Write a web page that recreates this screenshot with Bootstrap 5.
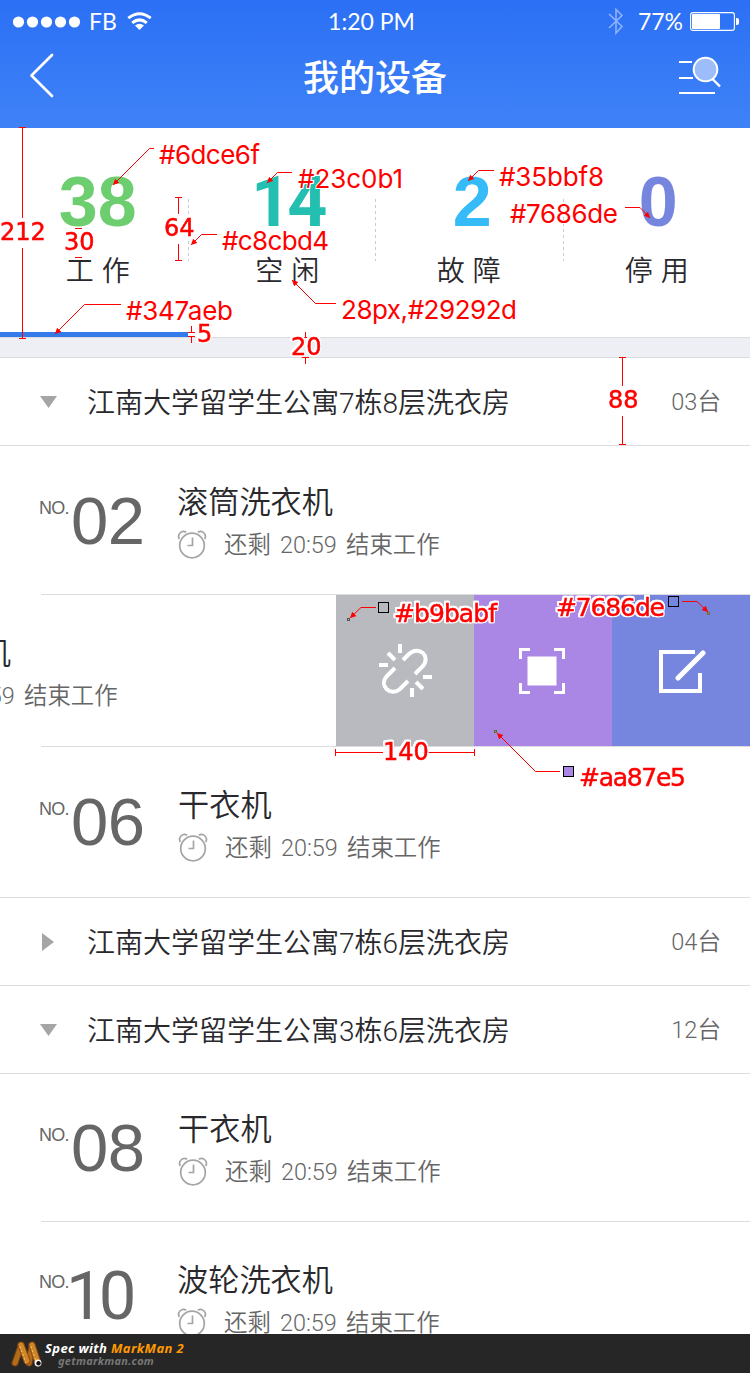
<!DOCTYPE html>
<html lang="zh-CN">
<head>
<meta charset="utf-8">
<meta name="viewport" content="width=device-width, initial-scale=1">
<title>我的设备</title>
<link href="https://cdn.jsdelivr.net/npm/bootstrap@5.3.0/dist/css/bootstrap.min.css" rel="stylesheet">
<style>
html,body{overflow:hidden}
body{font-family:"Liberation Sans","Noto Sans CJK SC",sans-serif;font-weight:350;color:#29292d;background:#fff;width:750px;height:1373px}
.screen{height:1373px;position:relative}
.top-area{height:128px;background:linear-gradient(#2b70f5,#3f82f7);color:#fff}
.status{height:43px;font:400 23px/43px Lato,sans-serif;padding:0 11px 0 13px}
.status>div{flex:1 1 0}
.clock-time{margin:0 4px 0 -5px}
.titlebar{height:85px;padding:0 29px}
.titlebar h1{font-size:36px;font-weight:500;line-height:72px;margin:0}
.titlebar>div{flex:1 1 0;height:85px}
.stats{height:210px;border-bottom:1px solid #dcdce0;position:relative}
.stats .stat{flex:none;width:25%;text-align:center;padding-top:38px;position:relative}
.stat b{display:block;font-size:70px;line-height:72px;font-weight:700}
.stat b.ones{font-family:Roboto,sans-serif;letter-spacing:-4px}
.stat span{display:block;font-size:28px;line-height:36px;margin-top:16px;white-space:pre}
.stat+.stat::before{content:"";position:absolute;left:0;top:71px;height:62px;width:1px;background:repeating-linear-gradient(#c8cbd4 0 3px,transparent 3px 6px)}
.tabline{position:absolute;left:0;bottom:0;width:188px;height:5px;background:#347aeb}
.gap-band{height:20px;background:#eeeff4;border-bottom:1px solid #dcdce0}
.group{height:88px;border-bottom:1px solid #dcdce0;padding:0 29px 0 40px;font-size:28px;font-family:Roboto,"Noto Sans CJK SC",sans-serif}
.group .caret{width:47px;flex:none;display:flex}
.group .name{line-height:82px;padding-top:5px;flex:1}
.group .total{font-size:23.6px;color:#666;line-height:86px}
.item{position:relative;overflow:hidden;flex:none}
.item.line::after{content:"";position:absolute;left:41px;right:0;bottom:0;height:1px;background:#dcdce0}
.item.full{border-bottom:1px solid #dcdce0}
.numb{width:138px;margin-left:39px;flex:none;color:#666;display:flex;align-items:flex-start}
.numb small{font-size:18px;line-height:20px;letter-spacing:-.7px;margin-top:6px;width:32px;flex:none}
.numb strong{font-size:67px;font-weight:400;line-height:58px;letter-spacing:-.5px}
.numb strong.ones{font-family:Roboto,sans-serif;letter-spacing:-5px;margin:1px 0 0 -5px}
.info{white-space:nowrap}
.info h2{font-size:31.2px;font-weight:350;line-height:40px;margin:1px 0 0}
.info p{font-family:Roboto,"Noto Sans CJK SC",sans-serif;font-size:23.4px;line-height:30px;word-spacing:3.5px;color:#666;margin:7px 0 0;display:flex}
.info p svg{margin:0 17px 0 0;flex:none}
.act{width:138px;height:151px;flex:none;display:flex}
.brandbar{position:absolute;left:0;bottom:0;width:100%;height:39px;background:#262626;font-family:"Noto Sans",sans-serif;font-style:italic;font-weight:700;color:#fff;padding-left:10px}
.brandbar .l1{font-size:13px;letter-spacing:.38px;line-height:14px;margin-top:7px}
.brandbar .l2{font-size:11px;letter-spacing:.25px;line-height:12px;color:#777;padding-left:13px}
.marks{position:absolute;left:0;top:0;pointer-events:none}
.marks .thin{font:400 26px Inter,sans-serif;fill:red;stroke:#fff;stroke-width:2px;paint-order:stroke}
.marks .wide{font:400 24px "DejaVu Sans",sans-serif;fill:red;stroke:red;stroke-width:.5px;filter:drop-shadow(1.5px 0 0 #fff) drop-shadow(-1.5px 0 0 #fff) drop-shadow(0 1.5px 0 #fff) drop-shadow(0 -1.5px 0 #fff)}
.marks .wide .hex{font-size:25px}
</style>
<script src="https://cdn.jsdelivr.net/npm/bootstrap@5.3.0/dist/js/bootstrap.bundle.min.js"></script>
</head>
<body>
<svg width="0" height="0" class="position-absolute"><defs>
<symbol id="clock" viewBox="0 0 30 30"><g fill="none" stroke="#a5a5a5" stroke-width="1.7"><circle cx="15" cy="15.5" r="12.3"/><path d="M15.5 7.500V15.500H10.500M2.300 9C-.2 4.500 4.500-.2 9.200 2.200M27.700 9C30.200 4.500 25.500-.2 20.800 2.200"/></g></symbol>
<marker id="tip" markerWidth="7" markerHeight="7" refX="6" refY="3" orient="auto" markerUnits="userSpaceOnUse"><path d="M0 0L6 3L0 6z" fill="red"/></marker>
</defs></svg>
<main class="screen d-flex flex-column overflow-hidden">
<header class="top-area flex-shrink-0">
 <div class="status d-flex align-items-center">
  <div class="d-flex align-items-center">
   <svg width="68" height="12" fill="#fff"><circle cx="5.500" cy="6" r="5.600"/><circle cx="19.500" cy="6" r="5.600"/><circle cx="33.500" cy="6" r="5.600"/><circle cx="47.500" cy="6" r="5.600"/><circle cx="61.500" cy="6" r="5.600"/></svg>
   <span style="margin:0 10px 0 8px">FB</span>
   <svg width="25" height="19" viewBox="0 0 25 19"><g fill="none" stroke="#fff" stroke-width="3"><path d="M1.300 6.200Q12.500-2.800 23.700 6.200M5.200 10.800Q12.500 5 19.800 10.800"/></g><path d="M8 13.500Q12.500 10 17 13.500L12.500 18z" fill="#fff"/></svg>
  </div>
  <span class="clock-time">1:20 PM</span>
  <div class="d-flex align-items-center justify-content-end">
   <svg width="16" height="27" viewBox="0 0 16 27" fill="none" stroke="#8fb2fa" stroke-width="1.600"><path d="M1 6L14 18.500L8 25V1.500L14 7.500L1 20"/></svg>
   <span style="margin:0 7px 0 14px">77%</span>
   <svg width="49" height="19" viewBox="0 0 49 19"><rect x=".6" y=".6" width="43.800" height="17.800" rx="2.500" fill="none" stroke="#fff" stroke-width="1.100"/><rect x="2" y="2" width="28" height="15" rx="1" fill="#fff"/><path d="M46 6h1a2 2 0 0 1 2 2v3a2 2 0 0 1-2 2h-1z" fill="#fff"/></svg>
  </div>
 </div>
 <div class="titlebar d-flex">
  <div><svg width="26" height="46" viewBox="0 0 26 46" style="margin-top:9px"><path d="M23 3L2.500 23.500L23 44" fill="none" stroke="#fff" stroke-width="2.700" stroke-linecap="round" stroke-linejoin="round"/></svg></div>
  <h1>我的设备</h1>
  <div class="text-end"><svg width="44" height="42" viewBox="0 0 44 42" style="margin-top:12px"><g stroke="#fff" stroke-width="2" fill="none"><path d="M2 7H15M2 23H16M2 38H38"/><circle cx="28.500" cy="14.500" r="11.800" fill="#9dbcfa"/><path d="M35.500 24L43 31.500" stroke-width="2.400"/></g></svg></div>
 </div>
</header>
<section class="stats d-flex flex-shrink-0">
 <div class="stat" style="padding-left:8px"><b style="color:#6dce6f">38</b><span>工 作</span></div>
 <div class="stat" style="padding-left:12px"><b class="ones" style="color:#23c0b1">14</b><span>空 闲</span></div>
 <div class="stat"><b style="color:#35bbf8;padding-left:7px">2</b><span>故 障</span></div>
 <div class="stat" style="padding-left:1px"><b style="color:#7686de;padding-left:3px">0</b><span>停 用</span></div>
 <div class="tabline"></div>
</section>
<div class="gap-band flex-shrink-0"></div>
<div class="group d-flex align-items-center flex-shrink-0"><span class="caret"><svg width="17" height="12"><path d="M0 0H17L8.500 12z" fill="#a5a5a5"/></svg></span><span class="name">江南大学留学生公寓7栋8层洗衣房</span><span class="total">03台</span></div>
<article class="item line d-flex" style="height:149px">
 <div class="numb" style="padding-top:46px"><small>NO.</small><strong>02</strong></div>
 <div class="info" style="padding-top:36px"><h2>滚筒洗衣机</h2><p><svg width="30" height="30"><use href="#clock"/></svg>还剩 20:59 结束工作</p></div>
</article>
<article class="item line d-flex" style="height:152px">
 <div class="info" style="width:336px;padding-top:38px;overflow:hidden"><div style="margin-left:-145px"><h2>滚筒洗衣机</h2><p><svg width="30" height="30"><use href="#clock"/></svg>还剩 20:59 结束工作</p></div></div>
 <div class="act" style="background:#b9babf"><svg class="m-auto" width="56" height="56" viewBox="0 0 56 56" fill="none" stroke="#fff" stroke-width="4"><path d="M26 18L32 12C42 3 54 14 46 24L38 32M18 26L10 34C1 44 14 55 23 47L31 39M23 2V11M11 11L18 18M2 23H11M46 35H55M39 40L46 47M35 46V55" transform="translate(0 -1)"/></svg></div>
 <div class="act" style="background:#aa87e5"><svg class="m-auto" width="48" height="48" viewBox="0 -1 48 48"><path d="M1.500 11V1.500H11M35 1.500H44.500V11M44.500 35V44.500H35M11 44.500H1.500V35" fill="none" stroke="#fff" stroke-width="3"/><path d="M8.500 8.500h29v29h-29z" fill="#fff"/></svg></div>
 <div class="act" style="background:#7686de"><svg class="m-auto" width="50" height="48" viewBox="-1 -1 50 48" fill="none" stroke="#fff" stroke-width="4"><path d="M38 4H4V43H43V25"/><path d="M21 30L46 5" stroke-width="5" stroke-linecap="round"/></svg></div>
</article>
<article class="item full d-flex" style="height:151px">
 <div class="numb" style="padding-top:46px"><small>NO.</small><strong>06</strong></div>
 <div class="info" style="padding:38px 0 0 1px"><h2>干衣机</h2><p><svg width="30" height="30"><use href="#clock"/></svg>还剩 20:59 结束工作</p></div>
</article>
<div class="group d-flex align-items-center flex-shrink-0"><span class="caret"><svg width="17" height="18"><path d="M2 0L14 9L2 18z" fill="#a5a5a5"/></svg></span><span class="name">江南大学留学生公寓7栋6层洗衣房</span><span class="total">04台</span></div>
<div class="group d-flex align-items-center flex-shrink-0"><span class="caret"><svg width="17" height="12"><path d="M0 0H17L8.500 12z" fill="#a5a5a5"/></svg></span><span class="name">江南大学留学生公寓3栋6层洗衣房</span><span class="total">12台</span></div>
<article class="item line d-flex" style="height:148px">
 <div class="numb" style="padding-top:45px"><small>NO.</small><strong>08</strong></div>
 <div class="info" style="padding:35px 0 0 1px"><h2>干衣机</h2><p><svg width="30" height="30"><use href="#clock"/></svg>还剩 20:59 结束工作</p></div>
</article>
<article class="item d-flex" style="height:112px">
 <div class="numb" style="padding-top:44px"><small>NO.</small><strong class="ones">10</strong></div>
 <div class="info" style="padding-top:38px"><h2>波轮洗衣机</h2><p><svg width="30" height="30"><use href="#clock"/></svg>还剩 20:59 结束工作</p></div>
</article>
<footer class="brandbar d-flex">
 <svg width="34" height="32" viewBox="0 0 34 32" style="margin-top:5px"><g fill="none" stroke-linecap="round"><path d="M5 24L11 7M19 24L22 7" stroke="#7a4310" stroke-width="7"/><path d="M5 24L11 7M19 24L22 7" stroke="#b36c1a" stroke-width="5"/><path d="M11 6L17 22M22 6L28 24" stroke="#8a4b10" stroke-width="7"/><path d="M11 6L17 22M22 6L28 24" stroke="#cf8628" stroke-width="5" /><path d="M10 8L16 24M21 8L26 22" stroke="#ffd27a" stroke-width="1" stroke-dasharray="1 3"/></g><circle cx="28" cy="24" r="3.400" fill="#fff"/><circle cx="28.500" cy="24.300" r="2.200" fill="#111"/></svg>
 <div><div class="l1" style="margin-left:1px">Spec with <span style="color:#f90">MarkMan 2</span></div><div class="l2" style="margin-left:1px">getmarkman.com</div></div>
</footer>
<svg class="marks" width="750" height="1373" viewBox="0 0 750 1373">
 <g fill="none" stroke="red" stroke-width="1" shape-rendering="crispEdges">
  <path d="M19 127.500H26M22.500 128V218M22.500 248V338M19 338.500H26M75 228.500H82M75 257.500H82M175 197.500H182M178.500 198V214M178.500 244V260M175 260.500H182M188 332.500H195M188 336.500H195M191.500 326V332M191.500 337V343M302 337.500H309M305.500 332V337M302 357.500H309M305.500 358V364M619 357.500H626M622.500 358V386M622.500 416V444M619 444.500H626M335.500 749V756M336 752.500H383M427 752.500H474M474.500 749V756"/>
 </g>
 <g fill="none" stroke="red" stroke-width="1">
  <path d="M154 148.500H149.500L113 185" marker-end="url(#tip)"/><path d="M292 172.500H277.500L267 183" marker-end="url(#tip)"/><path d="M494 170.500H478.500L468 181" marker-end="url(#tip)"/><path d="M625 207.500H640L650 218" marker-end="url(#tip)"/><path d="M217 234.500H201.500L191 245" marker-end="url(#tip)"/><path d="M121 304.500H84.500L55 334" marker-end="url(#tip)"/><path d="M336 303.500H315.500L292 280" marker-end="url(#tip)"/>
  <path d="M376 607.500H361L350 618" marker-end="url(#tip)"/><path d="M682 601.500H697L708 612" marker-end="url(#tip)"/><path d="M560 771.500H535.500L497 733" marker-end="url(#tip)"/>
 </g>
 <g fill="none" stroke="#000"><rect x="378.500" y="602.500" width="10" height="10" fill="#b9babf"/><rect x="668.500" y="596.500" width="10" height="10" fill="#7686de"/><rect x="563.500" y="766.500" width="10" height="10" fill="#aa87e5"/></g>
 <g fill="none" stroke="#555"><rect x="347.500" y="618.500" width="2" height="2"/><rect x="707.500" y="612.500" width="2" height="2" stroke="#7a7020"/><rect x="494.500" y="730.500" width="2" height="2" stroke="#5a7020"/></g>
 <g class="thin"><text x="159" y="164" textLength="101">#6dce6f</text><text x="298" y="188" textLength="105">#23c0b1</text><text x="499" y="186" textLength="105">#35bbf8</text><text x="510" y="223" textLength="108">#7686de</text><text x="222" y="250" textLength="107">#c8cbd4</text><text x="126" y="320" textLength="107">#347aeb</text><text x="341" y="319" textLength="176">28px,#29292d</text></g>
 <g class="wide"><text x="0" y="240">212</text><text x="64" y="250">30</text><text x="164" y="236">64</text><text x="197" y="342">5</text><text x="291" y="355">20</text><text x="608" y="408">88</text><text class="hex" x="394" y="622" textLength="103">#b9babf</text><text class="hex" x="556" y="616" textLength="109">#7686de</text><text x="383" y="760">140</text><text class="hex" x="579" y="786" textLength="107">#aa87e5</text></g>
</svg>
</main>
</body>
</html>
